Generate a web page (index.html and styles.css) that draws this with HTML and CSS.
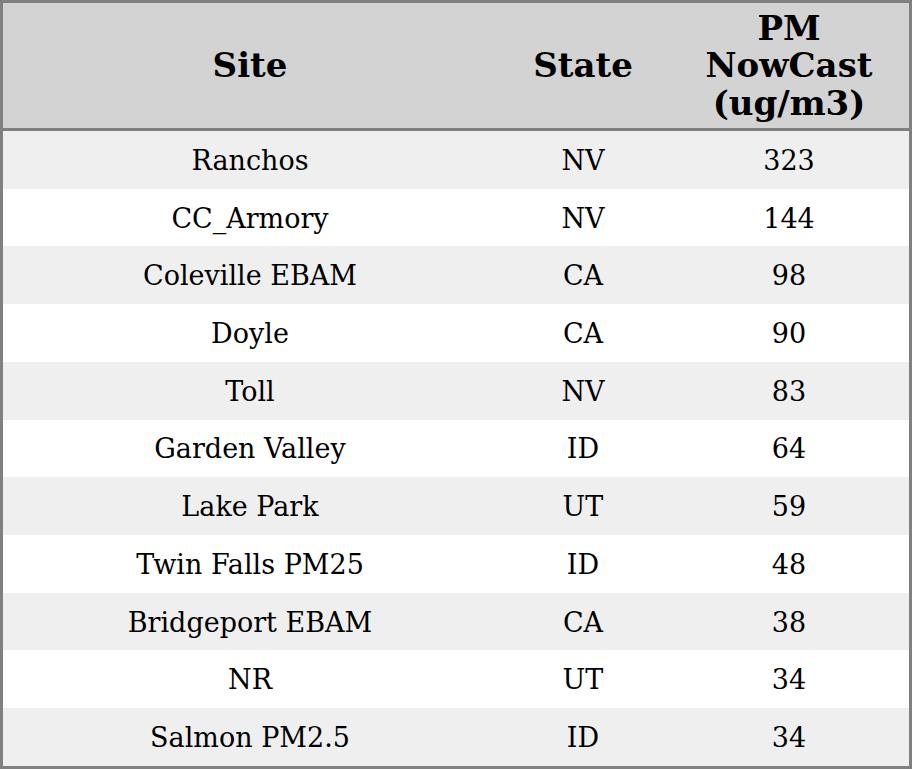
FILE: index.html
```html
<!DOCTYPE html>
<html>
<head>
<meta charset="utf-8">
<link rel="stylesheet" href="styles.css">
</head>
<body>
<table class="aq">
  <colgroup>
    <col class="c-site">
    <col class="c-state">
    <col class="c-pm">
  </colgroup>
  <thead>
    <tr><th>Site</th><th>State</th><th>PM<br>NowCast<br>(ug/m3)</th></tr>
  </thead>
  <tbody>
    <tr><td>Ranchos</td><td>NV</td><td>323</td></tr>
    <tr><td>CC_Armory</td><td>NV</td><td>144</td></tr>
    <tr><td>Coleville EBAM</td><td>CA</td><td>98</td></tr>
    <tr><td>Doyle</td><td>CA</td><td>90</td></tr>
    <tr><td>Toll</td><td>NV</td><td>83</td></tr>
    <tr><td>Garden Valley</td><td>ID</td><td>64</td></tr>
    <tr><td>Lake Park</td><td>UT</td><td>59</td></tr>
    <tr><td>Twin Falls PM25</td><td>ID</td><td>48</td></tr>
    <tr><td>Bridgeport EBAM</td><td>CA</td><td>38</td></tr>
    <tr><td>NR</td><td>UT</td><td>34</td></tr>
    <tr><td>Salmon PM2.5</td><td>ID</td><td>34</td></tr>
  </tbody>
</table>
</body>
</html>
```
FILE: styles.css
```css
html, body {
  margin: 0;
  padding: 0;
  background: #ffffff;
}
.aq {
  width: 912px;
  border-collapse: separate;
  border-spacing: 0;
  border: 3px solid #808080;
  table-layout: fixed;
  font-family: "DejaVu Serif", serif;
  color: #000;
}
.c-site { width: 494px; }
.c-state { width: 172px; }
.c-pm { width: 240px; }
.aq th {
  background: #d3d3d3;
  font-size: 34px;
  font-weight: bold;
  line-height: 37.5px;
  height: 124px;
  padding: 1px 0 0;
  text-align: center;
  vertical-align: middle;
  border-bottom: 3px solid #808080;
}
.aq td {
  font-size: 27px;
  height: 56.72px;
  padding: 1px 0 0;
  text-align: center;
  vertical-align: middle;
}
.aq tbody tr:nth-child(odd) td {
  background: #efefef;
}
```
